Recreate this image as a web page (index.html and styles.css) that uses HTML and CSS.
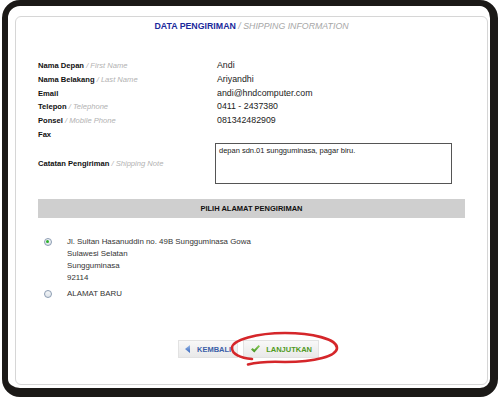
FILE: index.html
```html
<!DOCTYPE html>
<html lang="id">
<head>
  <meta charset="UTF-8" />
  <meta name="viewport" content="width=device-width, initial-scale=1.0" />
  <title>Data Pengiriman</title>
  <link rel="stylesheet" href="styles.css">
</head>
<body>
  <div class="frame">
    <div class="card">
      <h1 class="title">DATA PENGIRIMAN <span>/ SHIPPING INFORMATION</span></h1>

      <div class="info">
        <div class="label">Nama Depan <span>/ First Name</span></div>
        <div class="value">Andi</div>
        <div class="label">Nama Belakang <span>/ Last Name</span></div>
        <div class="value">Ariyandhi</div>
        <div class="label">Email</div>
        <div class="value">andi@hndcomputer.com</div>
        <div class="label">Telepon <span>/ Telephone</span></div>
        <div class="value">0411 - 2437380</div>
        <div class="label">Ponsel <span>/ Mobile Phone</span></div>
        <div class="value">081342482909</div>
        <div class="label">Fax</div>
        <div class="value"></div>
      </div>

      <div class="note">
        <div class="label">Catatan Pengiriman <span>/ Shipping Note</span></div>
        <div class="note-box">depan sdn.01 sungguminasa, pagar biru.</div>
      </div>

      <div class="bar">PILIH ALAMAT PENGIRIMAN</div>

      <div class="options">
        <div class="option">
          <span class="radio checked"></span>
          <div class="address">
            <div>Jl. Sultan Hasanuddin no. 49B Sungguminasa Gowa</div>
            <div>Sulawesi Selatan</div>
            <div>Sungguminasa</div>
            <div>92114</div>
          </div>
        </div>
        <div class="option">
          <span class="radio"></span>
          <div class="address">ALAMAT BARU</div>
        </div>
      </div>

      <div class="actions">
        <button class="btn back" type="button">
          <svg width="5" height="8" viewBox="0 0 5 8"><defs><linearGradient id="tb" x1="0" y1="0" x2="0" y2="1"><stop offset="0" stop-color="#9bbbe8"/><stop offset="1" stop-color="#3766bd"/></linearGradient></defs><path d="M5 0 L0 4 L5 8 Z" fill="url(#tb)"/></svg>
          KEMBALI
        </button>
        <button class="btn next" type="button">
          <svg width="9" height="8" viewBox="0 0 9 8"><defs><linearGradient id="tg" x1="0" y1="0" x2="0" y2="1"><stop offset="0" stop-color="#8ccf5a"/><stop offset="1" stop-color="#3f8f1f"/></linearGradient></defs><path d="M0 4.4 L1.6 3 L3.3 4.6 L7.6 0 L9 1.3 L3.3 7.6 Z" fill="url(#tg)"/></svg>
          LANJUTKAN
        </button>
      </div>
    </div>
  </div>

  <!-- red marker drawn over the screenshot -->
  <svg class="marker" width="500" height="397" viewBox="0 0 500 397">
    <path d="M248 364.5 Q262 361 285 362 C315 362 337 356 337 348 C337 339 312 333 285 333 C257 333 232 340 232 348 C232 354 240 358 252 359" fill="none" stroke="#d5262a" stroke-width="2.6" stroke-linecap="round"/>
  </svg>
</body>
</html>
```

FILE: styles.css
```css
* { box-sizing: border-box; }
body {
  margin: 0;
  background: #fff;
  font-family: 'Liberation Sans', Arial, sans-serif;
  color: #111;
}

.frame {
  margin-left: 2px;
  width: 496px;
  height: 397px;
  border: 6px solid #1b1917;
  border-right-width: 8px;
  border-bottom-width: 9px;
  border-radius: 18px;
  background: #fff;
  padding: 10px 2px 3px 7px;
}
.card {
  height: 100%;
  border: 1px solid #d6d6d6;
  border-radius: 6px;
  padding: 0 22px;
  display: flex;
  flex-direction: column;
}

.title {
  margin: 0;
  padding-top: 3px;
  line-height: 12px;
  font-size: 8.8px;
  font-weight: bold;
  text-align: center;
  color: #1b2a9c;
}
.title span { font-weight: normal; font-style: italic; color: #a6a6a6; }

.info {
  margin-top: 27px;
  display: grid;
  grid-template-columns: 177px 1fr;
  line-height: 13.8px;
}
.label { font-size: 7.6px; font-weight: bold; color: #111; }
.label span { font-weight: normal; font-style: italic; color: #b2b2b2; }
.value { font-size: 8.8px; padding-left: 2px; color: #222; }

.note {
  margin-top: 1px;
  display: grid;
  grid-template-columns: 177px 237px;
  align-items: center;
}
.note-box {
  height: 41px;
  border: 1px solid #555;
  padding: 2px 3px;
  font-size: 7.5px;
  line-height: 10px;
  color: #222;
}

.bar {
  margin-top: 15px;
  height: 19px;
  line-height: 19px;
  background: #cfcfcf;
  text-align: center;
  font-size: 7.5px;
  font-weight: bold;
  color: #111;
}

.options { margin-top: 18px; display: flex; flex-direction: column; gap: 4.7px; }
.option { display: flex; align-items: flex-start; }
.address { font-size: 7.9px; line-height: 12px; color: #333; }
.radio {
  flex: none;
  width: 8px;
  height: 8px;
  margin: 2px 15.5px 0 5.5px;
  border: 1px solid #8b9cb2;
  border-radius: 50%;
  background: linear-gradient(#f4f6f8, #dfe4ea);
  display: flex;
  align-items: center;
  justify-content: center;
}
.radio.checked::after {
  content: '';
  width: 3px;
  height: 3px;
  border-radius: 50%;
  background: #2db12d;
}

.actions {
  margin-top: 40px;
  display: flex;
  justify-content: center;
  gap: 5px;
  padding-right: 6px;
}
.btn {
  height: 18px;
  display: flex;
  align-items: center;
  gap: 7px;
  border: 1px solid #e2e2e2;
  background: linear-gradient(#f8f8f8, #e9e9e9);
  font-family: 'Liberation Sans', Arial, sans-serif;
  font-size: 7.5px;
  font-weight: bold;
}
.btn svg { flex: none; }
.btn.back { color: #3b60a8; padding: 0 6px; }
.btn.next { color: #4f9a23; padding: 0 6px 0 7px; gap: 6px; }

.marker { position: absolute; left: 0; top: 0; pointer-events: none; }
```
